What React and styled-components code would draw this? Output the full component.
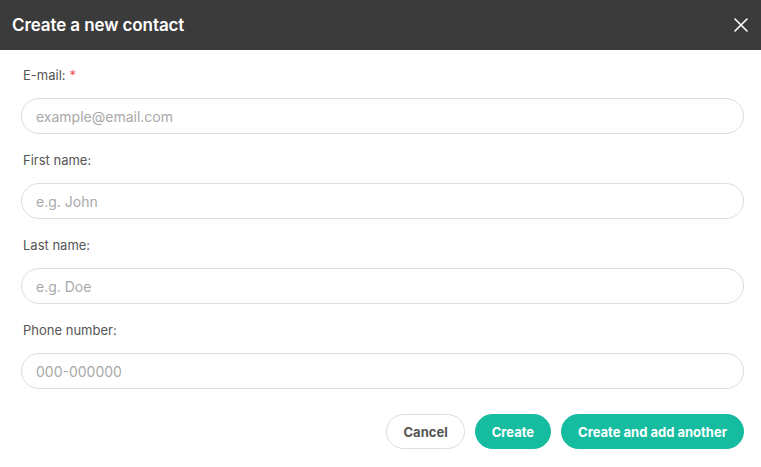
import React from "react";
import styled, { createGlobalStyle } from "styled-components";

const Global = createGlobalStyle`
  html, body { margin: 0; padding: 0; background: #fff; }
  body { font-family: Inter, "Noto Sans", sans-serif; }
  * { box-sizing: border-box; }
`;

const Dialog = styled.div`
  width: 761px;
  height: 467px;
  background: #fff;
  display: flex;
  flex-direction: column;
`;

const Header = styled.div`
  height: 50px;
  background: #3b3b3b;
  display: flex;
  align-items: center;
  justify-content: space-between;
  padding: 0 12px 0 12px;
`;

const Title = styled.h1`
  margin: 0;
  font-size: 17px;
  font-weight: 600;
  color: #fff;
  letter-spacing: -0.1px;
`;

const CloseButton = styled.button`
  border: none;
  background: none;
  padding: 0;
  width: 16px;
  height: 16px;
  display: flex;
  align-items: center;
  justify-content: center;
  cursor: pointer;
`;

const Body = styled.form`
  padding: 16px 17px 0 21px;
  display: flex;
  flex-direction: column;
`;

const Field = styled.div`
  display: flex;
  flex-direction: column;
  margin-bottom: 17px;
`;

const Label = styled.label`
  font-size: 13px;
  line-height: 18px;
  color: #555;
  padding-left: 2px;
  margin-bottom: 14px;
`;

const Required = styled.span`
  color: #f0505a;
  margin-left: 4px;
`;

const Input = styled.input`
  height: 36px;
  width: 100%;
  border: 1px solid #dcdce4;
  border-radius: 18px;
  padding: 0 14px;
  font-family: Inter, "Noto Sans", sans-serif;
  font-size: 14px;
  color: #333;
  outline: none;
  &::placeholder { color: #a9a9a9; }
`;

const Actions = styled.div`
  display: flex;
  justify-content: flex-end;
  gap: 10px;
  margin-top: 8px;
`;

const Button = styled.button`
  height: 35px;
  border-radius: 18px;
  padding: 0 16px;
  white-space: nowrap;
  font-family: Inter, "Noto Sans", sans-serif;
  font-size: 13px;
  font-weight: 700;
  cursor: pointer;
  border: 1px solid ${(p) => (p.$primary ? "#15bc9f" : "#dcdce4")};
  background: ${(p) => (p.$primary ? "#15bc9f" : "#fff")};
  color: ${(p) => (p.$primary ? "#fff" : "#555")};
`;

const fields = [
  { label: "E-mail:", placeholder: "example@email.com", required: true },
  { label: "First name:", placeholder: "e.g. John" },
  { label: "Last name:", placeholder: "e.g. Doe" },
  { label: "Phone number:", placeholder: "000-000000" },
];

export default function App() {
  return (
    <>
      <Global />
      <Dialog>
        <Header>
          <Title>Create a new contact</Title>
          <CloseButton type="button" aria-label="Close">
            <svg width="14" height="14" viewBox="0 0 14 14">
              <path d="M1 1L13 13M13 1L1 13" stroke="#fff" strokeWidth="1.6" strokeLinecap="round" />
            </svg>
          </CloseButton>
        </Header>
        <Body onSubmit={(e) => e.preventDefault()}>
          {fields.map((f) => (
            <Field key={f.label}>
              <Label>
                {f.label}
                {f.required && <Required>*</Required>}
              </Label>
              <Input placeholder={f.placeholder} />
            </Field>
          ))}
          <Actions>
            <Button type="button">Cancel</Button>
            <Button type="button" $primary>Create</Button>
            <Button type="button" $primary>Create and add another</Button>
          </Actions>
        </Body>
      </Dialog>
    </>
  );
}
